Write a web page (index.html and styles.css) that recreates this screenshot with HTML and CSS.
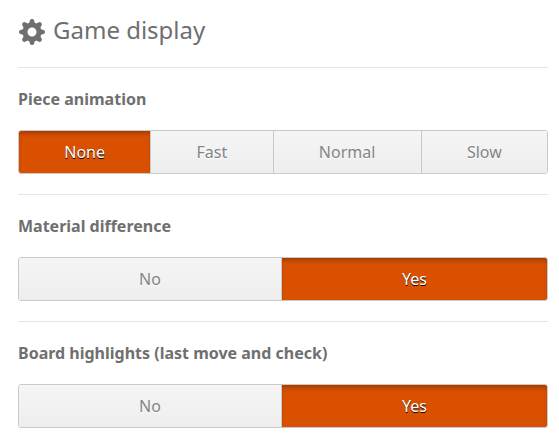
FILE: index.html
```html
<!DOCTYPE html>
<html lang="en">
<head>
  <meta charset="UTF-8">
  <title>Game display</title>
  <meta name="viewport" content="width=device-width, initial-scale=1">
  <link rel="stylesheet" href="styles.css">
</head>
<body>
  <main class="preferences">
    <h1 class="title">
      <svg class="gear" viewBox="0 0 26 26" aria-hidden="true">
        <defs>
          <path id="tooth" d="M9.500 5 C10.300 4 10.700 2.800 11 1.300 Q11.300 0 13 0 Q14.700 0 15 1.300 C15.300 2.800 15.700 4 16.500 5 Z"/>
        </defs>
        <circle cx="13" cy="13" r="7" fill="none" stroke="currentColor" stroke-width="5"/>
        <g fill="currentColor">
          <use href="#tooth"/>
          <use href="#tooth" transform="rotate(45 13 13)"/>
          <use href="#tooth" transform="rotate(90 13 13)"/>
          <use href="#tooth" transform="rotate(135 13 13)"/>
          <use href="#tooth" transform="rotate(180 13 13)"/>
          <use href="#tooth" transform="rotate(225 13 13)"/>
          <use href="#tooth" transform="rotate(270 13 13)"/>
          <use href="#tooth" transform="rotate(315 13 13)"/>
        </g>
      </svg>
      Game display
    </h1>
    <form>
      <section class="setting">
        <h2 id="animation-label">Piece animation</h2>
        <div class="radio-group" role="radiogroup" aria-labelledby="animation-label">
          <div class="option">
            <input type="radio" name="animation" id="animation-none" checked>
            <label for="animation-none">None</label>
          </div>
          <div class="option">
            <input type="radio" name="animation" id="animation-fast">
            <label for="animation-fast">Fast</label>
          </div>
          <div class="option">
            <input type="radio" name="animation" id="animation-normal">
            <label for="animation-normal">Normal</label>
          </div>
          <div class="option">
            <input type="radio" name="animation" id="animation-slow">
            <label for="animation-slow">Slow</label>
          </div>
        </div>
      </section>
      <section class="setting">
        <h2 id="material-label">Material difference</h2>
        <div class="radio-group" role="radiogroup" aria-labelledby="material-label">
          <div class="option">
            <input type="radio" name="material" id="material-no">
            <label for="material-no">No</label>
          </div>
          <div class="option">
            <input type="radio" name="material" id="material-yes" checked>
            <label for="material-yes">Yes</label>
          </div>
        </div>
      </section>
      <section class="setting">
        <h2 id="highlights-label">Board highlights (last move and check)</h2>
        <div class="radio-group" role="radiogroup" aria-labelledby="highlights-label">
          <div class="option">
            <input type="radio" name="highlights" id="highlights-no">
            <label for="highlights-no">No</label>
          </div>
          <div class="option">
            <input type="radio" name="highlights" id="highlights-yes" checked>
            <label for="highlights-yes">Yes</label>
          </div>
        </div>
      </section>
    </form>
  </main>
</body>
</html>
```
FILE: styles.css
```css
body {
  margin: 0;
  background: #fff;
  color: #6f6f6f;
  font-family: "Noto Sans", sans-serif;
  font-size: 16px;
}
.preferences {
  padding: 12px 11px 0 18px;
}
.title {
  display: flex;
  align-items: center;
  gap: 8px;
  margin: 0 0 19px;
  font-size: 24px;
  font-weight: 400;
  line-height: 36px;
}
.gear {
  width: 26px;
  height: 26px;
  margin-top: 4px;
  margin-left: 1px;
}

/* Settings */
.setting {
  padding: 20px 0;
  border-top: 1px solid #e6e6e6;
}
.setting:last-child {
  padding-bottom: 14px;
}
.setting h2 {
  margin: 0 0 20px;
  font-size: 16px;
  font-weight: 700;
  line-height: 22px;
}

/* Segmented radio buttons */
.radio-group {
  display: flex;
  border: 1px solid #c9c9c9;
  border-radius: 3px;
  overflow: hidden;
}
.option {
  position: relative;
  flex: 1 1 auto;
}
.option + .option {
  border-left: 1px solid #c9c9c9;
}
.option input {
  position: absolute;
  inset: 0;
  margin: 0;
  opacity: 0;
}
.option label {
  display: block;
  background: linear-gradient(#f5f5f5, #eee);
  color: #848484;
  line-height: 42px;
  text-align: center;
  text-shadow: 0 1px 0 #fff;
  cursor: pointer;
}
.option input:checked + label {
  background: #d85000;
  box-shadow: inset 0 4px 5px -2px rgba(0, 0, 0, 0.3);
  color: #fff;
  text-shadow: 0 1px 0 #000;
}
.option input:focus-visible + label {
  text-decoration: underline;
}
```
